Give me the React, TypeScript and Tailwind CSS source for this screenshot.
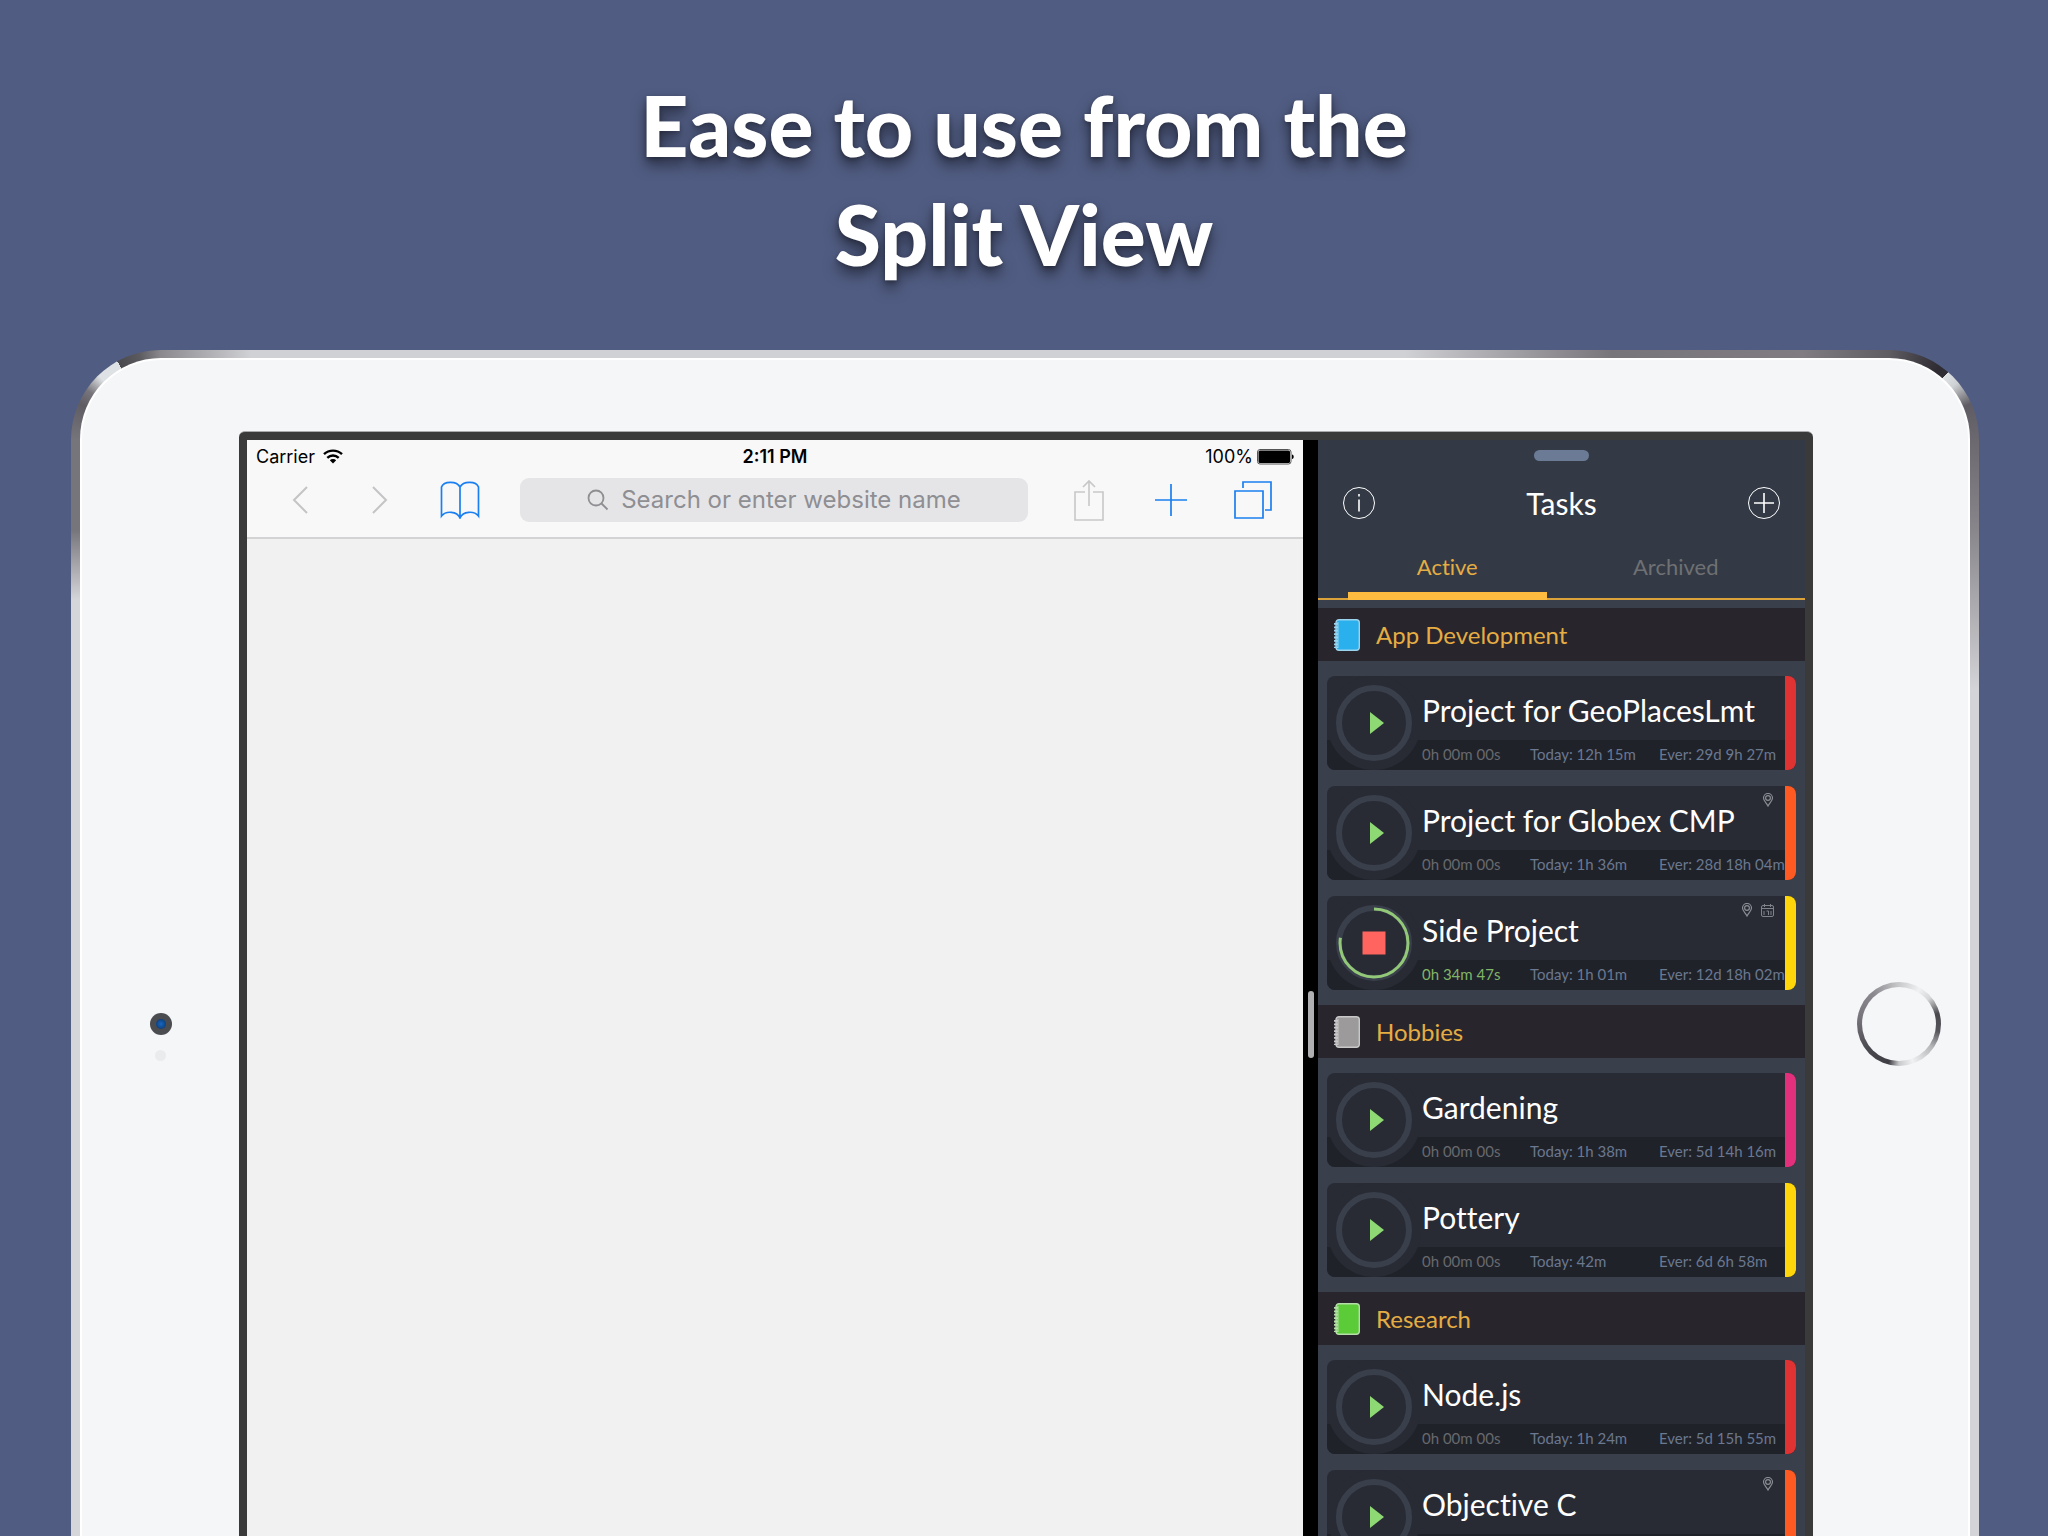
type Task = {
  name: string
  stripe: string
  timer?: string
  today?: string
  ever?: string
  running?: boolean
  place?: boolean
  calendar?: boolean
}

type Section = {
  title: string
  color: string
  edge: string
  tasks: Task[]
}

const sections: Section[] = [
  {
    title: 'App Development',
    color: '#2bb0ee',
    edge: '#9bd3ec',
    tasks: [
      { name: 'Project for GeoPlacesLmt', timer: '0h 00m 00s', today: '12h 15m', ever: '29d 9h 27m', stripe: 'bg-[#df3333]' },
      { name: 'Project for Globex CMP', timer: '0h 00m 00s', today: '1h 36m', ever: '28d 18h 04m', stripe: 'bg-[#ff5a22]', place: true },
      { name: 'Side Project', timer: '0h 34m 47s', today: '1h 01m', ever: '12d 18h 02m', stripe: 'bg-[#ffd60a]', running: true, place: true, calendar: true },
    ],
  },
  {
    title: 'Hobbies',
    color: '#9c9a9b',
    edge: '#c9c8c8',
    tasks: [
      { name: 'Gardening', timer: '0h 00m 00s', today: '1h 38m', ever: '5d 14h 16m', stripe: 'bg-[#e2307c]' },
      { name: 'Pottery', timer: '0h 00m 00s', today: '42m', ever: '6d 6h 58m', stripe: 'bg-[#ffd60a]' },
    ],
  },
  {
    title: 'Research',
    color: '#5bcb38',
    edge: '#b5dfa8',
    tasks: [
      { name: 'Node.js', timer: '0h 00m 00s', today: '1h 24m', ever: '5d 15h 55m', stripe: 'bg-[#df3333]' },
      { name: 'Objective C', stripe: 'bg-[#ff5a22]', place: true },
    ],
  },
]

function NotebookIcon({ color, edge }: { color: string; edge: string }) {
  return (
    <svg width="26" height="32" viewBox="0 0 26 32" fill="none" aria-hidden="true">
      <rect x="2" y="0.7" width="23.3" height="30.6" rx="3" fill={color} stroke={edge} strokeWidth="1.4" />
      <path d="M4 3v26" stroke={edge} strokeWidth="1" />
      <path d="M2 4v25" stroke={edge} strokeWidth="4" strokeDasharray="1.8 1.6" />
    </svg>
  )
}

function PlaceIcon() {
  return (
    <svg width="12" height="14" viewBox="0 0 12 14" fill="none" stroke="#8b8e94" strokeWidth="1.2" aria-hidden="true">
      <path d="M6 13C4.5 10 1.5 8 1.5 5a4.5 4.5 0 0 1 9 0c0 3-3 5-4.5 8Z" />
      <circle cx="6" cy="5" r="2.4" />
    </svg>
  )
}

function CalendarIcon() {
  return (
    <svg width="13" height="13" viewBox="0 0 13 13" fill="none" stroke="#80838a" strokeWidth="1" aria-hidden="true">
      <rect x="0.5" y="1.5" width="12" height="11" rx="1.5" />
      <path d="M0.5 4.5h12M3.5 0v3M9.5 0v3M5.5 7h2v4M3 7v4M10 7v4" />
    </svg>
  )
}

function TaskCard({ task }: { task: Task }) {
  return (
    <li className="relative h-[94px] overflow-hidden rounded-lg bg-[#282b34]">
      <div className="absolute inset-x-0 bottom-0 h-[30px] bg-[#20222a]" />
      <button
        aria-label={task.running ? `Stop ${task.name}` : `Start ${task.name}`}
        className="absolute left-0 top-0 size-[94px] rounded-full bg-[#282b34]"
      >
        <svg width="94" height="94" viewBox="0 0 94 94" fill="none" aria-hidden="true">
          <circle cx="47" cy="47" r="35" stroke="#393f4b" strokeWidth="6" />
          {task.running ? (
            <>
              <circle cx="47" cy="47" r="34" stroke="#92c877" strokeWidth="3" pathLength="100" strokeDasharray="77.5 100" transform="rotate(-90 47 47)" />
              <path d="M35.5 35.5h23v23h-23z" fill="#ff645f" />
            </>
          ) : (
            <path d="M43 36v22l14-11z" fill="#8ed974" />
          )}
        </svg>
      </button>
      <div className="relative ml-[95px] flex h-16 items-center pt-1 text-[30px] leading-[30px] text-white">
        {task.name}
      </div>
      {task.timer && (
        <div className="relative ml-[95px] grid h-7 grid-cols-[108px_129px_1fr] items-center whitespace-nowrap text-[15px] text-[#6a7890]">
          <span className={task.running ? 'text-[#80b567]' : 'text-[#67696d]'}>{task.timer}</span>
          <span>Today: {task.today}</span>
          <span>Ever: {task.ever}</span>
        </div>
      )}
      <div className={`absolute inset-y-0 right-0 w-[11px] ${task.stripe}`} />
      <div className="absolute right-[22px] top-[7px] flex items-center gap-2">
        {task.place && <PlaceIcon />}
        {task.calendar && <CalendarIcon />}
      </div>
    </li>
  )
}

function TasksApp() {
  return (
    <section className="w-[487px] shrink-0 bg-[#393f4b] font-['Lato',sans-serif] [font-variant-ligatures:none]">
      <header className="border-b-2 border-[#dba33a] bg-[#333a45]">
        <div className="flex justify-center pt-[10px]">
          <div className="h-[11px] w-[55px] rounded-full bg-[#6b7b96]" />
        </div>
        <div className="mt-5 flex h-11 items-center justify-between px-6">
          <button aria-label="Info">
            <svg width="34" height="34" viewBox="0 0 34 34" fill="none" stroke="#fff" aria-hidden="true">
              <circle cx="17" cy="17" r="15.5" strokeWidth="1" />
              <path d="M17 13.5v12M17 8v2.5" strokeWidth="1.6" />
            </svg>
          </button>
          <h2 className="text-[30px] leading-10 text-white">Tasks</h2>
          <button aria-label="Add task">
            <svg width="34" height="34" viewBox="0 0 34 34" fill="none" stroke="#fff" aria-hidden="true">
              <circle cx="17" cy="17" r="15.5" strokeWidth="1" />
              <path d="M7 17h20M17 7v20" strokeWidth="1.6" />
            </svg>
          </button>
        </div>
        <div className="mx-[30px] -mb-[2px] grid h-[75px] grid-cols-2 gap-[30px] pt-4 text-[22px]">
          <button className="border-b-8 border-[#fdbc40] text-[#e5ad43]">Active</button>
          <button className="border-b-8 border-transparent text-[#6f7073]">Archived</button>
        </div>
      </header>
      <div className="pt-2">
        {sections.map((section) => (
          <div key={section.title}>
            <h3 className="flex h-[53px] items-center gap-4 bg-[#28262c] pl-4 text-2xl text-[#e5ad43]">
              <NotebookIcon color={section.color} edge={section.edge} />
              {section.title}
            </h3>
            <ul className="flex flex-col gap-4 px-[9px] py-[15px]">
              {section.tasks.map((task) => (
                <TaskCard key={task.name} task={task} />
              ))}
            </ul>
          </div>
        ))}
      </div>
    </section>
  )
}

function Browser() {
  return (
    <section className="flex min-w-0 flex-1 flex-col bg-[#f1f1f1] font-['Inter',sans-serif]">
      <div className="grid h-[30px] grid-cols-3 items-center bg-[#f8f8f8] px-[9px] pt-[3px] text-lg leading-6 text-black">
        <div className="flex items-center gap-2">
          Carrier
          <svg width="20" height="15" viewBox="0 0 20 15" fill="none" stroke="#000" strokeWidth="2.4" aria-hidden="true">
            <path d="M1 5.2a13 13 0 0 1 18 0" />
            <path d="M4.3 8.8a8.3 8.3 0 0 1 11.4 0" />
            <path d="M10 14.5 6.8 11.3a4.6 4.6 0 0 1 6.4 0z" fill="#000" stroke="none" />
          </svg>
        </div>
        <div className="text-center font-semibold">2:11 PM</div>
        <div className="flex items-center justify-end gap-1">
          100%
          <svg width="37" height="16" viewBox="0 0 37 16" aria-hidden="true">
            <rect x="0.5" y="0.5" width="33.5" height="14.5" rx="2.5" fill="#f8f8f8" stroke="#555" />
            <rect x="1.5" y="1.5" width="31.5" height="12.5" rx="1.5" fill="#000" />
            <path d="M35 5.5c2.3 0.5 2.3 4 0 4.5z" fill="#000" />
          </svg>
        </div>
      </div>
      <div className="flex h-[69px] items-center border-b-2 border-[#d3d3d5] bg-[#f8f8f8] pb-2 pl-[13px] pr-[9px]">
        <button aria-label="Back" className="flex w-20 justify-center">
          <svg width="16" height="28" viewBox="0 0 16 28" fill="none" stroke="#c4c4c6" strokeWidth="2" aria-hidden="true">
            <path d="M15 1 2 14l13 13" />
          </svg>
        </button>
        <button aria-label="Forward" className="flex w-20 justify-center">
          <svg width="16" height="28" viewBox="0 0 16 28" fill="none" stroke="#c4c4c6" strokeWidth="2" aria-hidden="true">
            <path d="m1 1 13 13L1 27" />
          </svg>
        </button>
        <button aria-label="Bookmarks" className="flex w-20 justify-center">
          <svg width="40" height="38" viewBox="0 0 40 38" fill="none" stroke="#1a7ff0" strokeWidth="1.7" aria-hidden="true">
            <path d="M20 37V6C17 0 4 -0.5 1.5 6v29C6 29.5 17 30 20 37 23 30 34 29.5 38.5 35V6C36 -0.5 23 0 20 6" />
          </svg>
        </button>
        <label className="mx-5 flex h-11 min-w-0 flex-1 items-center justify-center gap-3 rounded-[9px] bg-[#e5e5e7]">
          <svg width="22" height="22" viewBox="0 0 22 22" fill="none" stroke="#8e8e93" strokeWidth="1.8" aria-hidden="true">
            <circle cx="9" cy="9" r="7.5" />
            <path d="m14.5 14.5 6 6" />
          </svg>
          <input
            type="text"
            aria-label="Search or enter website name"
            placeholder="Search or enter website name"
            className="field-sizing-content bg-transparent text-2xl outline-none placeholder:text-[#8e8e93]"
          />
        </label>
        <button aria-label="Share" className="flex w-[82px] justify-center">
          <svg width="30" height="42" viewBox="0 0 30 42" fill="none" stroke="#c7c7c9" strokeWidth="1.6" aria-hidden="true">
            <path d="M11 13H1v28h28V13H19M15 27V2M9 8l6-6 6 6" />
          </svg>
        </button>
        <button aria-label="New tab" className="flex w-[82px] justify-center">
          <svg width="32" height="32" viewBox="0 0 32 32" fill="none" stroke="#1a7ff0" strokeWidth="1.7" aria-hidden="true">
            <path d="M0 16h32M16 0v32" />
          </svg>
        </button>
        <button aria-label="Show tabs" className="flex w-[82px] justify-center">
          <svg width="38" height="38" viewBox="0 0 38 38" fill="none" stroke="#1a7ff0" strokeWidth="1.7" aria-hidden="true">
            <path d="M1 10h28v27H1zM9 7V1h28v28h-6" />
          </svg>
        </button>
      </div>
    </section>
  )
}

// Metal rim of the tablet: one tile per corner and edge
function Rim() {
  return (
    <div className="absolute inset-0 grid grid-cols-[90px_1fr_90px] grid-rows-[90px_1fr] overflow-hidden rounded-t-[90px]">
      <div className="bg-[conic-gradient(from_270deg_at_100%_100%,#77757c_0deg,#5f5d63_24deg,#77757b_34deg,#dfe2e4_46deg,#dfe2e4_61deg,#4a494e_61deg,#5a595e_75deg,#8b898e_90deg,#8b898e_360deg)]" />
      <div className="bg-[linear-gradient(90deg,#8b898e_0px,#d0d1d4_90px,#d0d1d4_72%,#77747a_84%,#807c82_95%,#5f5d62_100%)]" />
      <div className="bg-[conic-gradient(from_0deg_at_0%_100%,#5f5d62_0deg,#2f2d33_34deg,#2f2d33_41deg,#dfe2e4_41deg,#cfd2d4_50deg,#5f5d63_66deg,#6b696f_90deg,#6b696f_360deg)]" />
      <div className="bg-[linear-gradient(180deg,#77757c_0px,#77757c_90px,#d5d6d9_160px,#d5d6d9_100%)]" />
      <div />
      <div className="bg-[linear-gradient(180deg,#6b696f_0px,#88868b_90px,#d3d4d7_250px,#d3d4d7_100%)]" />
    </div>
  )
}

export default function App() {
  return (
    <div className="flex h-screen flex-col overflow-hidden bg-[#505c82]">
      <h1 className="pb-[62px] pt-[70px] text-center font-['Lato',sans-serif] text-[84px] font-black leading-[109px] text-white [text-shadow:0_8px_14px_rgba(0,0,0,0.5),0_2px_4px_rgba(0,0,0,0.3)]">
        Ease to use from the
        <br />
        Split View
      </h1>
      <div className="relative ml-[71px] mr-[69px] flex min-h-0 flex-1 flex-col px-[9px] pt-2">
        <Rim />
        <div className="relative flex min-h-0 flex-1 rounded-t-[81px] border-x-2 border-t-2 border-white bg-[#f4f6f8] pt-[71px]">
          <div className="flex w-[157px] shrink-0 flex-col items-center gap-[15px] pt-[582px]">
            <div className="flex size-[22px] items-center justify-center rounded-full bg-[#4b4c50]">
              <div className="size-[10px] rounded-full bg-[radial-gradient(circle,#1668c0,#0d2f63)]" />
            </div>
            <div className="size-[11px] rounded-full bg-[#e9ebed]" />
          </div>
          <div className="flex min-w-0 flex-1 overflow-hidden rounded-t-md border-t border-[#a9a9ab] bg-[#3a3a3a] px-2 pt-2">
            <Browser />
            <div className="flex w-[15px] shrink-0 justify-center bg-black pt-[551px]">
              <div className="h-[67px] w-[6px] rounded-full bg-[#b0b0b2]" />
            </div>
            <TasksApp />
          </div>
          <div className="flex w-[155px] shrink-0 justify-center pl-4 pt-[551px]">
            <button
              aria-label="Home"
              className="size-[84px] rounded-full bg-[conic-gradient(from_0deg,#c8c9cb,#f0f1f2_30deg,#d5d6d8_50deg,#4a494e_75deg,#55545a_100deg,#b5b6b8_125deg,#f0f1f2_160deg,#c8c9cb_180deg,#3f3e44_195deg,#4a494f_230deg,#77757b_280deg,#8b898f_320deg,#c8c9cb_360deg)] p-[5px]"
            >
              <span className="block size-full rounded-full bg-[#f4f6f8]" />
            </button>
          </div>
        </div>
      </div>
    </div>
  )
}
